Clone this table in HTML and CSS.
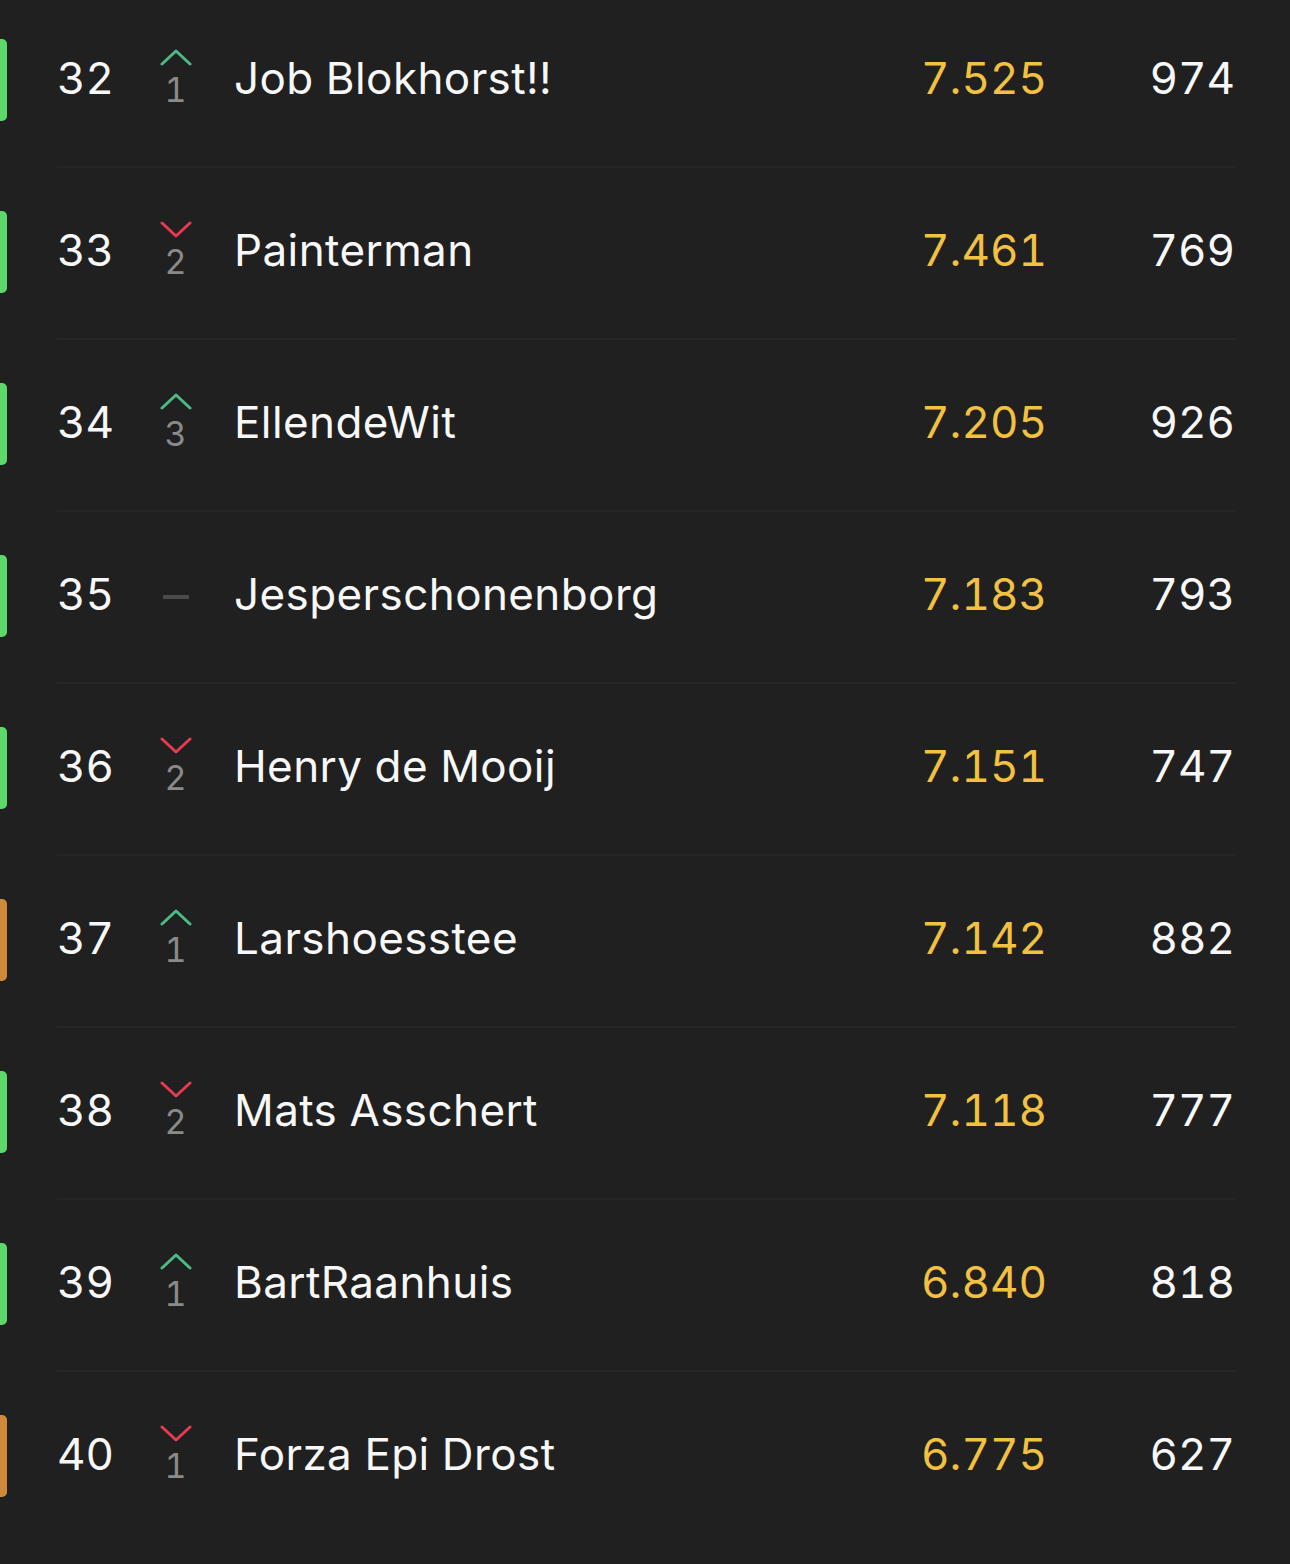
FILE: index.html
```html
<!DOCTYPE html>
<html>
<head>
<meta charset="utf-8">
<link rel="stylesheet" href="styles.css">
</head>
<body>
<div class="list">
  <div class="row"><span class="bar green"></span><div class="cells"><span class="rank">32</span><span class="trend up"><svg viewBox="0 0 32 17"><path d="M2 15 L16 2 L30 15"/></svg><span class="delta">1</span></span><span class="name">Job Blokhorst!!</span><span class="score">7.525</span><span class="pts">974</span></div></div>
  <div class="row"><span class="bar green"></span><div class="cells"><span class="rank">33</span><span class="trend down"><svg viewBox="0 0 32 17"><path d="M2 2 L16 15 L30 2"/></svg><span class="delta">2</span></span><span class="name">Painterman</span><span class="score">7.461</span><span class="pts">769</span></div></div>
  <div class="row"><span class="bar green"></span><div class="cells"><span class="rank">34</span><span class="trend up"><svg viewBox="0 0 32 17"><path d="M2 15 L16 2 L30 15"/></svg><span class="delta">3</span></span><span class="name">EllendeWit</span><span class="score">7.205</span><span class="pts">926</span></div></div>
  <div class="row"><span class="bar green"></span><div class="cells"><span class="rank">35</span><span class="trend same"><span class="dash"></span></span><span class="name">Jesperschonenborg</span><span class="score">7.183</span><span class="pts">793</span></div></div>
  <div class="row"><span class="bar green"></span><div class="cells"><span class="rank">36</span><span class="trend down"><svg viewBox="0 0 32 17"><path d="M2 2 L16 15 L30 2"/></svg><span class="delta">2</span></span><span class="name">Henry de Mooij</span><span class="score">7.151</span><span class="pts">747</span></div></div>
  <div class="row"><span class="bar orange"></span><div class="cells"><span class="rank">37</span><span class="trend up"><svg viewBox="0 0 32 17"><path d="M2 15 L16 2 L30 15"/></svg><span class="delta">1</span></span><span class="name">Larshoesstee</span><span class="score">7.142</span><span class="pts">882</span></div></div>
  <div class="row"><span class="bar green"></span><div class="cells"><span class="rank">38</span><span class="trend down"><svg viewBox="0 0 32 17"><path d="M2 2 L16 15 L30 2"/></svg><span class="delta">2</span></span><span class="name">Mats Asschert</span><span class="score">7.118</span><span class="pts">777</span></div></div>
  <div class="row"><span class="bar green"></span><div class="cells"><span class="rank">39</span><span class="trend up"><svg viewBox="0 0 32 17"><path d="M2 15 L16 2 L30 15"/></svg><span class="delta">1</span></span><span class="name">BartRaanhuis</span><span class="score">6.840</span><span class="pts">818</span></div></div>
  <div class="row"><span class="bar orange"></span><div class="cells"><span class="rank">40</span><span class="trend down"><svg viewBox="0 0 32 17"><path d="M2 2 L16 15 L30 2"/></svg><span class="delta">1</span></span><span class="name">Forza Epi Drost</span><span class="score">6.775</span><span class="pts">627</span></div></div>
</div>
</body>
</html>
```
FILE: styles.css
```css
html, body {
  margin: 0;
  padding: 0;
  background: #202020;
}
body {
  font-family: Inter, "Noto Sans", sans-serif;
  color: #f7f7f7;
  height: 1564px;
  overflow: hidden;
}
.list {
  margin-top: -4px;
}
.row {
  display: flex;
  align-items: stretch;
  height: 172px;
}
.bar {
  align-self: center;
  width: 7px;
  height: 82px;
  margin-bottom: 4px;
  border-radius: 0 5px 5px 0;
  flex: none;
}
.bar.green { background: #5ed86a; }
.bar.orange { background: #d08a3c; }
.cells {
  flex: 1;
  display: flex;
  align-items: center;
  margin-left: 50px;
  margin-right: 55px;
  padding-bottom: 6px;
  border-bottom: 2px solid #262626;
  font-size: 44px;
  line-height: 1;
  font-variant-numeric: tabular-nums;
}
.row:last-child .cells {
  border-bottom-color: transparent;
}
.rank {
  width: 102px;
  flex: none;
}
.trend {
  width: 31px;
  flex: none;
  display: flex;
  flex-direction: column;
  align-items: center;
  margin-left: 1px;
}
.trend svg {
  width: 32px;
  height: 17px;
  fill: none;
  stroke-width: 3;
  stroke-linecap: round;
  stroke-linejoin: round;
  margin-bottom: 7px;
}
.trend.up svg { stroke: #4dba86; }
.trend.down svg { stroke: #e63a4e; }
.delta {
  font-size: 34px;
  line-height: 34px;
  color: #8a8a8a;
}
.dash {
  width: 26px;
  height: 4px;
  background: #4a4a4a;
  margin-top: 6px;
}
.name {
  flex: 1;
  margin-left: 43px;
  white-space: nowrap;
  letter-spacing: 0.4px;
}
.score {
  width: 140px;
  text-align: right;
  color: #f2c142;
}
.pts {
  width: 188px;
  text-align: right;
}
```
